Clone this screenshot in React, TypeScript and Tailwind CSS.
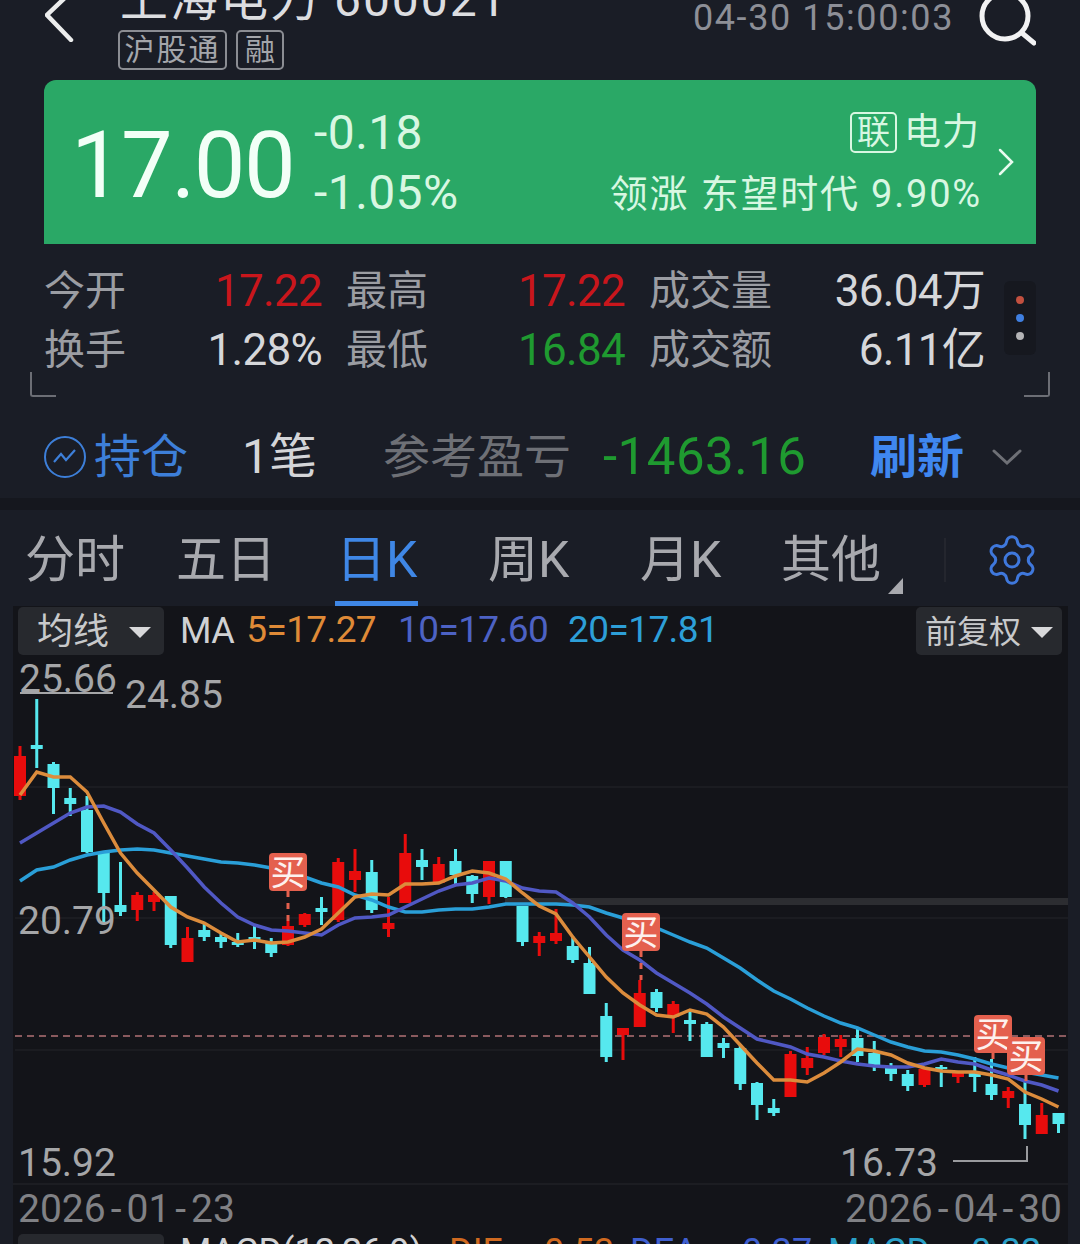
import { Settings } from 'lucide-react';

// high, body top, body bottom, low, colour: page coordinates, one per trading day
type Candle = [number, number, number, number, 'r' | 'c'];

const candles: Candle[] = [
  [746, 756, 796, 800, 'r'], [699, 745, 749, 768, 'c'], [762, 764, 788, 814, 'c'], [788, 798, 804, 816, 'c'],
  [796, 810, 852, 853, 'c'], [853, 853, 893, 923, 'c'], [862, 905, 912, 916, 'c'], [892, 895, 910, 921, 'r'],
  [892, 895, 902, 911, 'r'], [896, 896, 945, 948, 'c'], [927, 938, 962, 962, 'r'], [923, 930, 937, 941, 'c'],
  [934, 937, 942, 948, 'c'], [933, 942, 945, 947, 'c'], [926, 937, 941, 949, 'c'], [938, 942, 953, 957, 'c'],
  [921, 926, 945, 946, 'r'], [913, 914, 925, 927, 'r'], [897, 908, 912, 925, 'c'], [858, 862, 920, 922, 'r'],
  [849, 871, 880, 892, 'r'], [860, 872, 910, 913, 'c'], [897, 923, 929, 937, 'r'], [834, 853, 903, 903, 'r'],
  [849, 860, 867, 880, 'c'], [857, 864, 883, 883, 'r'], [849, 861, 875, 884, 'c'], [875, 876, 894, 903, 'c'],
  [861, 861, 897, 904, 'r'], [861, 861, 897, 898, 'c'], [906, 906, 942, 946, 'c'], [932, 936, 943, 956, 'r'],
  [909, 933, 941, 944, 'r'], [936, 946, 960, 963, 'c'], [947, 963, 994, 994, 'c'], [1003, 1016, 1057, 1062, 'c'],
  [1028, 1028, 1035, 1060, 'r'], [980, 993, 1027, 1027, 'r'], [989, 992, 1008, 1012, 'c'], [1001, 1004, 1017, 1033, 'r'],
  [1010, 1020, 1024, 1041, 'c'], [1022, 1024, 1057, 1057, 'c'], [1038, 1043, 1048, 1058, 'c'], [1044, 1048, 1084, 1090, 'c'],
  [1082, 1083, 1105, 1120, 'c'], [1099, 1108, 1113, 1116, 'c'], [1051, 1054, 1097, 1097, 'r'], [1047, 1058, 1068, 1075, 'r'],
  [1034, 1037, 1053, 1055, 'r'], [1035, 1039, 1047, 1057, 'r'], [1028, 1038, 1056, 1062, 'c'], [1041, 1053, 1065, 1071, 'c'],
  [1063, 1068, 1074, 1081, 'c'], [1070, 1074, 1086, 1091, 'c'], [1069, 1069, 1085, 1087, 'r'], [1065, 1067, 1069, 1087, 'c'],
  [1073, 1073, 1077, 1083, 'r'], [1057, 1073, 1077, 1092, 'c'], [1059, 1084, 1095, 1100, 'c'], [1087, 1091, 1098, 1108, 'r'],
  [1082, 1104, 1125, 1139, 'c'], [1103, 1115, 1134, 1134, 'r'], [1113, 1113, 1124, 1133, 'c'],
];

const ma5 = [795, 772, 777, 777, 792, 823, 853, 873, 890, 907, 917, 923, 933, 942, 940, 943, 942, 937, 929, 913, 897, 894, 895, 884, 884, 883, 876, 871, 873, 879, 893, 906, 914, 937, 957, 977, 993, 1005, 1015, 1017, 1010, 1014, 1027, 1045, 1063, 1080, 1080, 1082, 1073, 1062, 1049, 1051, 1055, 1063, 1068, 1071, 1072, 1072, 1075, 1079, 1092, 1099, 1107];
const ma10 = [843, 833, 823, 813, 807, 806, 812, 824, 833, 850, 868, 887, 903, 917, 925, 930, 931, 933, 935, 925, 918, 917, 915, 907, 899, 891, 885, 883, 878, 881, 888, 891, 892, 903, 917, 935, 950, 960, 973, 983, 993, 1004, 1017, 1028, 1039, 1043, 1047, 1054, 1057, 1061, 1064, 1066, 1067, 1067, 1064, 1059, 1062, 1064, 1070, 1075, 1081, 1085, 1091];
const ma20 = [881, 870, 867, 860, 855, 852, 850, 849, 850, 853, 856, 859, 862, 863, 865, 868, 873, 877, 883, 887, 895, 900, 907, 912, 912, 910, 909, 909, 907, 904, 904, 904, 904, 905, 907, 913, 918, 925, 928, 935, 942, 948, 958, 968, 980, 991, 999, 1008, 1016, 1023, 1028, 1035, 1042, 1047, 1051, 1052, 1055, 1059, 1064, 1068, 1072, 1075, 1078];

const dayX = (i: number) => 20 + i * 16.75;
const linePoints = (ys: number[]) => ys.map((y, i) => `${dayX(i)},${y}`).join(' ');

const buyMarks = [
  { x: 269, y: 853, to: 921 },
  { x: 622, y: 913, to: 980 },
  { x: 974, y: 1015, to: 1060 },
  { x: 1007, y: 1037, to: 1082 },
];

function CandleChart() {
  return (
    <svg className="absolute inset-0 h-full w-full" viewBox="13 606 1055 577">
      {[787, 918, 1050].map((y) => (
        <line key={y} x1="15" x2="1068" y1={y} y2={y} stroke="#1b1c21" strokeWidth="2" />
      ))}
      <rect x="505" y="898" width="563" height="7" fill="#2c2d31" />
      <line x1="15" x2="1068" y1="1036" y2="1036" stroke="#8a5a5e" strokeWidth="2" strokeDasharray="7 5" />
      {candles.map(([high, top, bottom, low, kind], i) => {
        const color = kind === 'r' ? '#e80c0c' : '#56e8ee';
        return (
          <g key={i} fill={color}>
            <rect x={dayX(i) - 1.5} y={high} width="3" height={low - high} />
            <rect x={dayX(i) - 6} y={top} width="12" height={bottom - top} />
          </g>
        );
      })}
      <polyline points={linePoints(ma20)} fill="none" stroke="#2a9fd8" strokeWidth="3.5" />
      <polyline points={linePoints(ma10)} fill="none" stroke="#5058c4" strokeWidth="3.5" />
      <polyline points={linePoints(ma5)} fill="none" stroke="#dc8c3c" strokeWidth="3.5" />
      {buyMarks.map((m) => (
        <g key={m.x}>
          <line x1={m.x + 19} x2={m.x + 19} y1={m.y + 38} y2={m.to} stroke="#e4604e" strokeWidth="3" strokeDasharray="6 6" />
          <rect x={m.x} y={m.y} width="38" height="38" rx="4" fill="#e4604e" />
          <text x={m.x + 19} y={m.y + 32} textAnchor="middle" fontSize="35" fill="#fdf1ee">买</text>
        </g>
      ))}
      <path d="M953 1161 H1027 V1146" fill="none" stroke="#9a9b9e" strokeWidth="2" />
      <line x1="20" x2="113" y1="693" y2="693" stroke="#a5a6a8" strokeWidth="2" />
    </svg>
  );
}

function Stat({ label, value, color }: { label: string; value: string; color: string }) {
  return (
    <div className="flex items-center justify-between">
      <span className="-ml-px text-[41px] leading-none text-[#9b9da3]">{label}</span>
      <span className={`text-[44px] leading-none tracking-[-0.7px] ${color}`}>{value}</span>
    </div>
  );
}

function DateLabel({ parts }: { parts: string[] }) {
  return (
    <span>
      {parts[0]}
      <span className="mx-[5px]">-</span>
      {parts[1]}
      <span className="mx-[5px]">-</span>
      {parts[2]}
    </span>
  );
}

export default function App() {
  return (
    <div className="relative h-[1244px] w-[1080px] overflow-hidden bg-[#1a1d26] font-['Roboto','Noto_Sans_CJK_SC',sans-serif]">
      {/* Header */}
      <header className="relative flex h-[80px] overflow-hidden pl-[45px]">
        <svg className="h-[42px] w-[30px] shrink-0" viewBox="0 0 30 42" fill="none" stroke="#eceded" strokeWidth="4.5" strokeLinecap="round">
          <path d="M26 -8 L2 15 L26 40" />
        </svg>
        <div className="ml-[43px]">
          <div className="-mt-[22px] whitespace-nowrap pl-[2px] text-[48px] leading-[44px] tracking-[2px] text-[#dcdde0]">上海电力 600021</div>
          <div className="mt-[8px] flex gap-[9px]">
            <span className="flex h-[40px] w-[109px] items-center justify-center rounded-[5px] border-2 border-[#8b8d93] text-[30px] leading-none tracking-[2px] text-[#a4a6ab]">沪股通</span>
            <span className="flex h-[40px] w-[48px] items-center justify-center rounded-[5px] border-2 border-[#8b8d93] text-[30px] leading-none text-[#a4a6ab]">融</span>
          </div>
        </div>
        <div className="ml-auto flex items-start pr-[44px]">
          <span className="mt-[-2px] text-[36px] leading-[40px] tracking-[1.6px] text-[#8d8f97]">04-30 15:00:03</span>
          <svg className="ml-[22px] h-[46px] w-[60px]" viewBox="0 0 60 46" fill="none" stroke="#f2f2f3" strokeWidth="5" strokeLinecap="round">
            <circle cx="29" cy="16" r="23" />
            <path d="M46 33 L58 43" />
          </svg>
        </div>
      </header>

      {/* Price card */}
      <section className="mx-[44px] flex h-[164px] items-center rounded-t-[12px] bg-[#2aa866] pl-[27px] pr-[22px]">
        <span className="pt-[7px] text-[92px] leading-none tracking-[-1.6px] text-[#f2fff7]">17.00</span>
        <div className="ml-[20px] flex flex-col gap-[11px] text-[48px] leading-[49px] tracking-[0.4px] text-[#d8f7e2]">
          <span>-0.18</span>
          <span>-1.05%</span>
        </div>
        <div className="ml-auto flex flex-col items-end gap-[22px] pt-[1px] text-[#d8f7e2]">
          <div className="flex items-center gap-[7px] pr-[2px]">
            <span className="flex h-[41px] w-[47px] items-center justify-center rounded-[5px] border-2 border-[#d8f7e2] text-[33px] leading-none">联</span>
            <span className="text-[37px] leading-none tracking-[1px]">电力</span>
          </div>
          <span className="whitespace-nowrap text-[38px] leading-none tracking-[1.8px]">领涨 东望时代 9.90%</span>
        </div>
        <svg className="ml-[16px] h-[28px] w-[16px]" viewBox="0 0 16 28" fill="none" stroke="#e8fbef" strokeWidth="2.5" strokeLinecap="round">
          <path d="M2 2 L14 14 L2 26" />
        </svg>
      </section>

      {/* Quote stats */}
      <section className="relative h-[175px] pl-[45px] pt-[25px]">
        <div className="grid w-[940px] grid-cols-[277px_278px_335px] gap-x-[25px] gap-y-[15px]">
          <Stat label="今开" value="17.22" color="text-[#c9161c]" />
          <Stat label="最高" value="17.22" color="text-[#c9161c]" />
          <Stat label="成交量" value="36.04万" color="text-[#d6d7da]" />
          <Stat label="换手" value="1.28%" color="text-[#d6d7da]" />
          <Stat label="最低" value="16.84" color="text-[#1f9a30]" />
          <Stat label="成交额" value="6.11亿" color="text-[#d6d7da]" />
        </div>
        <div className="absolute left-[1004px] top-[37px] flex h-[74px] w-[32px] flex-col items-center justify-center gap-[10px] rounded-[6px] bg-[#16181f]">
          <span className="h-[8px] w-[8px] rounded-full bg-[#c2503f]" />
          <span className="h-[8px] w-[8px] rounded-full bg-[#3f7fe0]" />
          <span className="h-[8px] w-[8px] rounded-full bg-[#b4b4b6]" />
        </div>
        <span className="absolute left-[30px] top-[128px] h-[25px] w-[26px] rounded-bl-[3px] border-b-2 border-l-2 border-[#6c6e75]" />
        <span className="absolute left-[1024px] top-[128px] h-[25px] w-[26px] rounded-br-[3px] border-b-2 border-r-2 border-[#6c6e75]" />
      </section>

      {/* Holdings row */}
      <section className="flex h-[79px] items-center pb-[4px] pl-[44px] text-[47px] leading-none">
        <svg className="h-[42px] w-[42px] shrink-0" viewBox="0 0 42 42" fill="none" stroke="#3d7fd9" strokeWidth="2">
          <circle cx="21" cy="21" r="20" />
          <path d="M10 26 L17 18 L22 24 L31 14" strokeWidth="2.2" />
        </svg>
        <span className="ml-[8px] w-[148px] text-[#3d7fd9]">持仓</span>
        <span className="w-[141px] text-[48px] text-[#d4d5d8]">1笔</span>
        <span className="w-[220px] text-[#6e7076]">参考盈亏</span>
        <span className="w-[267px] text-[51px] tracking-[0.5px] text-[#1f9a30]">-1463.16</span>
        <span className="w-[122px] font-bold text-[#3f87f0]">刷新</span>
        <svg className="h-[18px] w-[30px]" viewBox="0 0 30 18" fill="none" stroke="#6e7076" strokeWidth="3" strokeLinecap="round">
          <path d="M2 3 L15 15 L28 3" />
        </svg>
      </section>

      {/* Section gap */}
      <div className="h-[12px] bg-[#15171e]" />

      {/* Period tabs */}
      <nav className="relative h-[96px] text-[50px] leading-none text-[#a8a9ae]">
        <div className="flex h-[91px] items-center pl-[25px] pt-[8px]">
          <span className="w-[151px]">分时</span>
          <span className="w-[160px]">五日</span>
          <span className="w-[152px] text-[#3f87e6]">日K</span>
          <span className="w-[152px]">周K</span>
          <span className="w-[141px]">月K</span>
          <span className="w-[163px]">其他</span>
          <span className="h-[44px] w-[2px] bg-[#24262e]" />
          <Settings className="ml-[38px] h-[56px] w-[56px] text-[#3f78dc]" strokeWidth={1.3} />
        </div>
        <span className="absolute left-[335px] top-[91px] h-[5px] w-[83px] bg-[#3f87e6]" />
        <span className="absolute left-[888px] top-[68px] h-0 w-0 border-b-[16px] border-l-[15px] border-b-[#a8a9ae] border-l-transparent" />
      </nav>

      {/* Chart panel */}
      <main className="ml-[13px] h-[640px] w-[1055px] bg-[#131419]">
        <div className="relative h-[577px]">
          <CandleChart />
          <div className="relative flex h-[50px] items-center pl-[5px] pr-[6px]">
            <div className="flex h-[48px] w-[146px] items-center justify-center gap-[20px] rounded-[5px] bg-[#27292e] pl-[6px] pt-[2px] text-[36px] leading-none text-[#c8c9cb]">
              均线
              <span className="h-0 w-0 border-x-[11px] border-t-[11px] border-x-transparent border-t-[#d8d8da]" />
            </div>
            <span className="ml-[16px] text-[36px] leading-none tracking-[-0.5px] text-[#d0d1d3]">MA</span>
            <span className="-mt-[3px] ml-[12px] text-[37px] leading-none tracking-[-0.6px] text-[#df8a37]">5=17.27</span>
            <span className="-mt-[3px] ml-[22px] text-[37px] leading-none tracking-[-0.6px] text-[#4d62c4]">10=17.60</span>
            <span className="-mt-[3px] ml-[20px] text-[37px] leading-none tracking-[-0.6px] text-[#2d9fd8]">20=17.81</span>
            <div className="ml-auto flex h-[48px] w-[146px] items-center justify-center gap-[10px] rounded-[5px] bg-[#27292e] pt-[2px] text-[32px] leading-none text-[#c8c9cb]">
              前复权
              <span className="h-0 w-0 border-x-[11px] border-t-[11px] border-x-transparent border-t-[#d8d8da]" />
            </div>
          </div>
          <span className="absolute left-[6px] top-[54px] text-[39px] leading-none text-[#a5a6a8]">25.66</span>
          <span className="absolute left-[112px] top-[70px] text-[39px] leading-none text-[#a5a6a8]">24.85</span>
          <span className="absolute left-[5px] top-[296px] text-[39px] leading-none text-[#a5a6a8]">20.79</span>
          <span className="absolute left-[5px] top-[538px] text-[39px] leading-none text-[#a5a6a8]">15.92</span>
          <span className="absolute left-[827px] top-[538px] text-[39px] leading-none text-[#a5a6a8]">16.73</span>
        </div>
        <div className="flex h-[50px] items-center justify-between border-t-2 border-[#1c1d22] pl-[5px] pr-[6px] text-[39px] leading-none text-[#808185]">
          <DateLabel parts={['2026', '01', '23']} />
          <DateLabel parts={['2026', '04', '30']} />
        </div>
        <div className="flex h-[13px] items-start pl-[5px] pt-[1px] text-[36px] leading-none">
          <div className="h-[48px] w-[146px] shrink-0 rounded-[5px] bg-[#27292e]" />
          <span className="ml-[16px] w-[269px] shrink-0 whitespace-nowrap text-[#d0d1d3]">MACD(12,26,9)</span>
          <span className="w-[85px] shrink-0 text-[#d06a20]">DIF</span>
          <span className="w-[96px] shrink-0 text-[#d06a20]">-0.53</span>
          <span className="w-[102px] shrink-0 text-[#3f5fd0]">DEA</span>
          <span className="w-[96px] shrink-0 text-[#3f5fd0]">-0.37</span>
          <span className="w-[133px] shrink-0 text-[#2aa0c8]">MACD</span>
          <span className="shrink-0 text-[#2aa0c8]">-0.32</span>
        </div>
      </main>
    </div>
  );
}
